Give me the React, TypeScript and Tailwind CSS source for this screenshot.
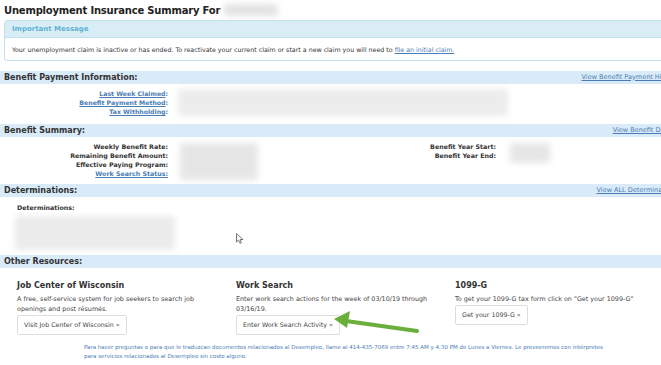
import React from 'react'

const font = { fontFamily: '"DejaVu Sans", Verdana, sans-serif' }

function SectionHeader({ title, link }: { title: string; link?: string }) {
  return (
    <div className="flex h-[13px] items-center justify-between bg-[#d9eaf8] pl-[4px] pr-[6px]">
      <span className="text-[8px] font-bold text-[#333]">{title}</span>
      {link && <a href="#" className="text-[6.5px] text-[#4a7db5] underline">{link}</a>}
    </div>
  )
}

function Blur({ className }: { className: string }) {
  return <div className={`rounded-[3px] bg-[#e3e3e3] blur-[3px] ${className}`} />
}

function Resource({ title, text, button }: { title: string; text: string; button: string }) {
  return (
    <div className="w-[219px] pr-[10px]">
      <h3 className="text-[8px] font-bold leading-[11px] text-[#333]">{title}</h3>
      <p className="mt-[3px] w-[196px] text-[6.4px] leading-[10px] text-[#444]">{text}</p>
      <button className="mt-[1px] block h-[20px] rounded-[2px] border border-[#ddd] bg-white px-[6px] text-[6.3px] text-[#444]">{button}</button>
    </div>
  )
}

export default function App() {
  return (
    <div className="relative h-[365px] w-[661px] overflow-hidden bg-white" style={font}>
      <div className="w-[684px]">
        <div className="flex h-[20px] items-center pl-[4px]">
          <h1 className="text-[10px] font-bold tracking-[-0.2px] text-[#222]">Unemployment Insurance Summary For</h1>
          <Blur className="ml-[4px] h-[12px] w-[54px] bg-[#d0d0d0]" />
        </div>

        <div className="ml-[4px] h-[41px] rounded-[3px] border border-[#bfe0ee]">
          <div className="flex h-[17px] items-center border-b border-[#bfe0ee] bg-[#d9edf7] pl-[7px]">
            <span className="text-[7px] font-bold text-[#5fb3d3]">Important Message</span>
          </div>
          <p className="pl-[7px] pt-[7px] text-[6.3px] text-[#333]">
            Your unemployment claim is inactive or has ended. To reactivate your current claim or start a new claim you will need to{' '}
            <a href="#" className="text-[#4a7db5] underline">file an initial claim.</a>
          </p>
        </div>

        <div className="mt-[10px]">
          <SectionHeader title="Benefit Payment Information:" link="View Benefit Payment History" />
          <div className="flex h-[40px] pt-[5px]">
            <div className="w-[168px] text-right text-[6.2px] font-bold leading-[9px] text-[#4a7db5]">
              <div><a href="#" className="underline">Last Week Claimed</a>:</div>
              <div><a href="#" className="underline">Benefit Payment Method</a>:</div>
              <div><a href="#" className="underline">Tax Withholding</a>:</div>
            </div>
            <Blur className="ml-[10px] h-[27px] w-[330px] bg-[#ececec]" />
          </div>
        </div>

        <div>
          <SectionHeader title="Benefit Summary:" link="View Benefit Details" />
          <div className="flex h-[47px] pt-[5px] text-[6.3px] font-bold leading-[9px] text-[#333]">
            <div className="w-[168px] text-right">
              <div>Weekly Benefit Rate:</div>
              <div>Remaining Benefit Amount:</div>
              <div>Effective Paying Program:</div>
              <div><a href="#" className="text-[#4a7db5] underline">Work Search Status:</a></div>
            </div>
            <Blur className="ml-[12px] mt-[1px] h-[37px] w-[78px] bg-[#e6e6e6]" />
            <div className="ml-[70px] w-[168px] text-right">
              <div>Benefit Year Start:</div>
              <div>Benefit Year End:</div>
            </div>
            <Blur className="ml-[14px] mt-[1px] h-[20px] w-[40px] bg-[#e6e6e6]" />
          </div>
        </div>

        <div>
          <SectionHeader title="Determinations:" link="View ALL Determinations" />
          <div className="h-[58px] pl-[17px] pt-[6px]">
            <div className="text-[6.3px] font-bold text-[#333]">Determinations:</div>
            <Blur className="-ml-[2px] mt-[4px] h-[34px] w-[160px] bg-[#ebebeb]" />
          </div>
        </div>

        <div>
          <SectionHeader title="Other Resources:" />
          <div className="flex pl-[17px] pt-[12px]">
            <Resource title="Job Center of Wisconsin" text="A free, self-service system for job seekers to search job openings and post résumés." button="Visit Job Center of Wisconsin »" />
            <Resource title="Work Search" text="Enter work search actions for the week of 03/10/19 through 03/16/19." button="Enter Work Search Activity »" />
            <Resource title="1099-G" text={'To get your 1099-G tax form click on "Get your 1099-G"'} button="Get your 1099-G »" />
          </div>
          <p className="mt-[8px] w-[640px] pl-[84px] text-[5.5px] leading-[9px] text-[#4a7db5]">
            Para hacer preguntas o para que le traduzcan documentos relacionados al Desempleo, llame al 414-435-7069 entre 7:45 AM y 4:30 PM de Lunes a Viernes. Le proveeremos con intérpretes
            <br />
            para servicios relacionados al Desempleo sin costo alguno.
          </p>
        </div>
      </div>

      <svg className="absolute left-[236px] top-[233px]" width="8" height="11" viewBox="0 0 8 11">
        <path d="M0.5 0.5 L0.5 9 L2.6 7 L4 10.3 L5.4 9.7 L4.1 6.5 L7 6.5 Z" fill="white" stroke="#555" strokeWidth="0.8" />
      </svg>

      <svg className="absolute left-[328px] top-[308px]" width="95" height="30" viewBox="0 0 95 30">
        <line x1="89" y1="23" x2="18" y2="13" stroke="#6aae3b" strokeWidth="4" strokeLinecap="round" />
        <path d="M6 11 L22 3 L19 20 Z" fill="#6aae3b" />
      </svg>
    </div>
  )
}
